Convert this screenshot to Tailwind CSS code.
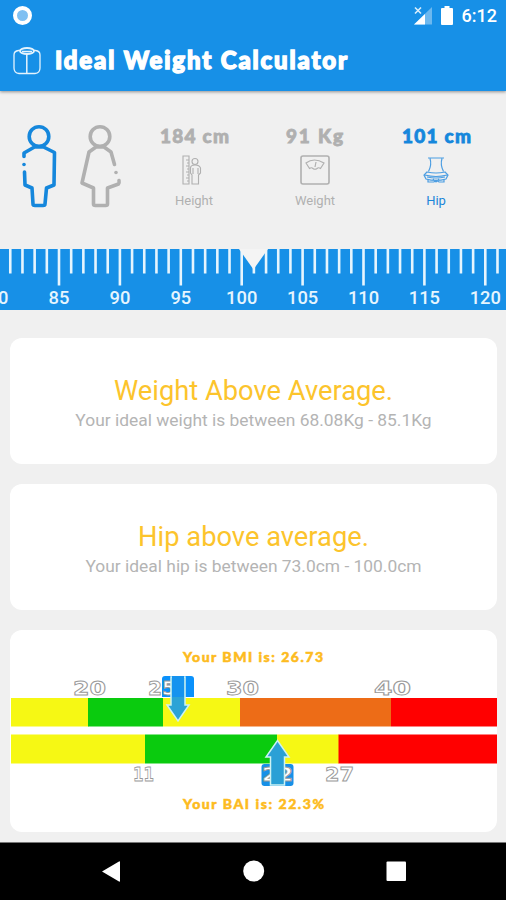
<!DOCTYPE html>
<html lang="en">
  <head>
    <meta charset="UTF-8" />
    <meta name="viewport" content="width=device-width, initial-scale=1.0" />
    <title>Ideal Weight Calculator</title>
    <script src="https://cdn.jsdelivr.net/npm/@tailwindcss/browser@4"></script>
  </head>
  <body class="bg-[#f0f0f0] font-['Roboto',sans-serif] w-[506px] h-[900px] overflow-hidden flex flex-col">
    <header class="relative h-[91px] shrink-0 bg-[#1790e7] text-white shadow-[0_1px_3px_rgba(0,0,0,0.4)]">
      <!-- Status bar -->
      <div class="h-[31px] flex items-center justify-between pl-[13px] pr-[9px]">
        <div class="w-[19px] h-[19px] rounded-full border-4 border-white bg-[#7fc0f2]"></div>
        <div class="flex items-center">
          <svg class="w-[18px] h-[19px]" viewBox="0 0 18 19">
            <path d="M0 18.5 18 1v17.5z" fill="#6cb8ef" />
            <path d="M0 18.5 11 8v10.5z" fill="#fff" />
            <path d="M1 1.5l6 6M7 1.5l-6 6" stroke="#d9eefc" stroke-width="1.6" />
          </svg>
          <svg class="w-3 h-[19px] ml-[9px]" viewBox="0 0 12 19">
            <path d="M3.500 0h5v2H11q1 0 1 1v15q0 1-1 1H1q-1 0-1-1V3q0-1 1-1h2.500z" fill="#fff" />
          </svg>
          <span class="ml-[9px] text-[18px] leading-[31px] font-medium">6:12</span>
        </div>
      </div>
      <div class="flex items-center h-[60px] pl-[13px]">
        <svg class="w-7 h-7" viewBox="0 0 28 28" fill="none" stroke="#e4f3fd" stroke-width="1.3">
          <path d="M7 3.500H5.500Q1 4 1 8v13q0 5 5 5.500h16q5-.5 5-5.500V8q0-4-4.500-4.500H21" />
          <ellipse cx="14" cy="4" rx="7" ry="3" stroke-width="1.800" />
          <path d="M9 4.500h10M13.800 7v19.500" stroke-width="1.500" />
        </svg>
        <svg class="w-[310px] h-10 ml-3.5" viewBox="0 0 310 40">
          <text x="0" y="28" textLength="292" fill="#fff" stroke="#fff" stroke-width="1.400" class="font-['Lato',sans-serif] font-black text-[24px]">Ideal Weight Calculator</text>
        </svg>
      </div>
    </header>

    <!-- Gender and measures -->
    <section class="h-[158px] shrink-0 flex">
      <svg class="w-[140px] h-[158px] shrink-0" viewBox="0 0 140 158" fill="none" stroke-width="3.600" stroke-linejoin="round" stroke-linecap="round">
        <g stroke="#1587dc">
          <circle cx="39" cy="45.500" r="9.800" />
          <path d="M24 65.500V62l10.500-6h9L54.500 61.500 54 94l-7.500 3-1.500 16q0 1.500-2 1.500h-8q-2 0-2-1.500L32 97l-7-3-.500-13" />
          <circle cx="24" cy="73.500" r="1.800" fill="#1587dc" stroke="none" />
        </g>
        <g stroke="#b0b0b0">
          <circle cx="100" cy="45.500" r="9.800" />
          <path d="M114.500 73.500 111 61l-7-5h-8l-7 5-7 31 11.500 5v16q0 1.500 2 1.500h10q2 0 2-1.500V97l11-4q1-1 .5-3.500" />
          <circle cx="116" cy="81.500" r="1.800" fill="#b0b0b0" stroke="none" />
        </g>
      </svg>

      <div class="flex-1 flex pt-[34px]">
        <div class="w-[108px] flex flex-col items-center text-[#b0b0b0]">
          <svg class="w-[72px] h-[26px]" viewBox="0 0 72 26">
            <text x="2" y="18" textLength="69" fill="#b0b0b0" stroke="#b0b0b0" stroke-width="0.800" class="font-['Lato',sans-serif] font-black text-[19px]">184 cm</text>
          </svg>
          <svg class="w-5 h-[30px] mt-[4px] -ml-1" viewBox="0 0 20 30" fill="none" stroke="currentColor" stroke-width="1.100">
            <path d="M1 1h6v28H1zM4 5h3M5 8h2M4 11h3M5 14h2M4 17h3M5 20h2M4 23h3M5 26h2" />
            <circle cx="13" cy="6.500" r="3" />
            <path d="M10 29V20L8.500 18v-5q0-3 4.500-3t5.500 3v5l-2 2v9zM11 13v6M16 13v6" />
          </svg>
          <span class="text-[13px] leading-4 mt-2">Height</span>
        </div>
        <div class="w-[134px] flex flex-col items-center text-[#b0b0b0]">
          <svg class="w-[60px] h-[26px]" viewBox="0 0 60 26">
            <text x="1" y="18" textLength="57" fill="#b0b0b0" stroke="#b0b0b0" stroke-width="0.800" class="font-['Lato',sans-serif] font-black text-[19px]">91 Kg</text>
          </svg>
          <svg class="w-[30px] h-[30px] mt-1" viewBox="0 0 30 30" fill="none" stroke="currentColor" stroke-width="1.600">
            <rect x="1" y="1" width="28" height="28" rx="2" />
            <path d="M6 8q8-6 18 0l-3.500 5.500q-2-1.500-3.500 0-2 1.500-4 0-1.500-1.500-3.500 0zM15 12l1-5" stroke-width="1.200" />
          </svg>
          <span class="text-[13px] leading-4 mt-2">Weight</span>
        </div>
        <div class="w-[108px] flex flex-col items-center text-[#1b86d9]">
          <svg class="w-[72px] h-[26px]" viewBox="0 0 72 26">
            <text x="2" y="18" textLength="69" fill="#1587dc" stroke="#1587dc" stroke-width="0.800" class="font-['Lato',sans-serif] font-black text-[19px]">101 cm</text>
          </svg>
          <svg class="w-[26px] h-[30px] mt-1" viewBox="0 0 26 30" fill="none" stroke="#4b9de2" stroke-width="1.200">
            <path d="M5 3h16M7 3.500q2 6-1.500 13M19 3.500q-2 6 1.500 13" />
            <path d="M4 17q9 2 18 0l3 3-2 4q-10 3-20 0l-2-4zM2 20q11 3 22 0M4 22q9 2 18 0M5 25v2h6l2-2 3 2h5v-2M10 24l3 3 3-3" />
          </svg>
          <span class="text-[13px] leading-4 mt-2">Hip</span>
        </div>
      </div>
    </section>

    <svg id="ruler" class="w-[506px] h-[61px] shrink-0 bg-[#1790e7]" viewBox="0 0 506 61"></svg>

    <main class="flex-1 pl-[10px] pr-[9px] pt-7 flex flex-col gap-5">
      <div class="h-[126px] shrink-0 bg-white rounded-xl flex flex-col items-center pt-9">
        <h2 class="text-[27.3px] leading-[34px] text-[#fcc42c]">Weight Above Average.</h2>
        <p class="text-[17.4px] leading-6 text-[#b4b4b4] whitespace-nowrap">Your ideal weight is between 68.08Kg - 85.1Kg</p>
      </div>
      <div class="h-[126px] shrink-0 bg-white rounded-xl flex flex-col items-center pt-9">
        <h2 class="text-[27.3px] leading-[34px] text-[#fcc42c]">Hip above average.</h2>
        <p class="text-[17.4px] leading-6 text-[#b4b4b4] whitespace-nowrap">Your ideal hip is between 73.0cm - 100.0cm</p>
      </div>
      <!-- BMI and BAI scales -->
      <div class="h-[202px] shrink-0 bg-white rounded-xl">
        <svg class="w-[487px] h-[202px]" viewBox="10 630 487 202">
          <g fill="#fdbb20" stroke="#fdbb20" stroke-width="0.500" class="font-['Lato',sans-serif] font-black text-[14px]">
            <text x="183" y="662" textLength="140">Your BMI is: 26.73</text>
            <text x="183" y="809" textLength="141">Your BAI is: 22.3%</text>
          </g>
          <g>
            <rect x="11" y="698" width="78" height="28.500" fill="#f6f814" />
            <rect x="88" y="698" width="75" height="28.500" fill="#0acb0e" />
            <rect x="163" y="698" width="77" height="28.500" fill="#f6f814" />
            <rect x="240" y="698" width="151" height="28.500" fill="#ed6c17" />
            <rect x="391" y="698" width="106" height="28.500" fill="#f00" />
            <rect x="11" y="734.500" width="134" height="29" fill="#f6f814" />
            <rect x="145" y="734.500" width="132" height="29" fill="#0acb0e" />
            <rect x="277" y="734.500" width="62" height="29" fill="#f6f814" />
            <rect x="338.500" y="734.500" width="158.500" height="29" fill="#f00" />
          </g>
          <path d="M162 697v-18q0-3 3-3h26q3 0 3 3v18z" fill="#0a91fb" />
          <rect x="261.500" y="764" width="32" height="22" rx="3" fill="#1790e7" />
          <g fill="#fff" stroke="#999" stroke-width="0.900" class="font-['DejaVu_Sans',sans-serif] font-bold text-[19px]">
            <text x="73" y="695" textLength="33" lengthAdjust="spacingAndGlyphs">20</text>
            <text x="148" y="695" textLength="28" lengthAdjust="spacingAndGlyphs">25</text>
            <text x="226" y="695" textLength="33" lengthAdjust="spacingAndGlyphs">30</text>
            <text x="374" y="695" textLength="37" lengthAdjust="spacingAndGlyphs">40</text>
            <text x="133" y="781" textLength="21" lengthAdjust="spacingAndGlyphs">11</text>
            <text x="262" y="781" textLength="31" lengthAdjust="spacingAndGlyphs">22</text>
            <text x="325" y="781" textLength="29" lengthAdjust="spacingAndGlyphs">27</text>
          </g>
          <path d="M171 677h14v28h4l-11 16-11-16h4z" fill="#2ca3d6" stroke="#cdf2f4" stroke-width="1.500" />
          <path d="M172 676h12v21h-12z" fill="#1593ef" />
          <path d="M270.500 785v-28h-4.500l11.500-16.500L289 757h-4.500v28z" fill="#2aa0d6" stroke="#cdf2f4" stroke-width="1.500" />
        </svg>
      </div>
    </main>

    <nav class="h-[58px] shrink-0 bg-black border-t border-[#777]">
      <svg class="w-[506px] h-[57px]" viewBox="0 0 506 57" fill="#fff">
        <path d="M102 28.500 119 18.500q1-.500 1 .500v19q0 1-1 .500z" />
        <circle cx="253.700" cy="28" r="10.500" />
        <rect x="386.500" y="18.500" width="19.500" height="19.500" rx="1" />
      </svg>
    </nav>

    <script>
      const ruler = document.getElementById("ruler");
      const step = 12.18;
      let marks = "";

      for (let value = 80; value <= 121; value++) {
        const x = 59 + (value - 85) * step;
        const long = value % 5 === 0;
        marks += `<rect x="${x - 1.3}" y="0" width="2.6" height="${long ? 36.5 : 24.5}" fill="#e6f5fe" />`;
        if (long) {
          marks += `<text x="${x}" y="55" text-anchor="middle" font-size="18.3" font-weight="500" fill="#e6f5fe">${value}</text>`;
        }
      }

      // current value pointer
      marks += '<path d="M239 0h29l-14.500 20.500z" fill="#f4f4f4" />';
      ruler.innerHTML = marks;
    </script>
  </body>
</html>
